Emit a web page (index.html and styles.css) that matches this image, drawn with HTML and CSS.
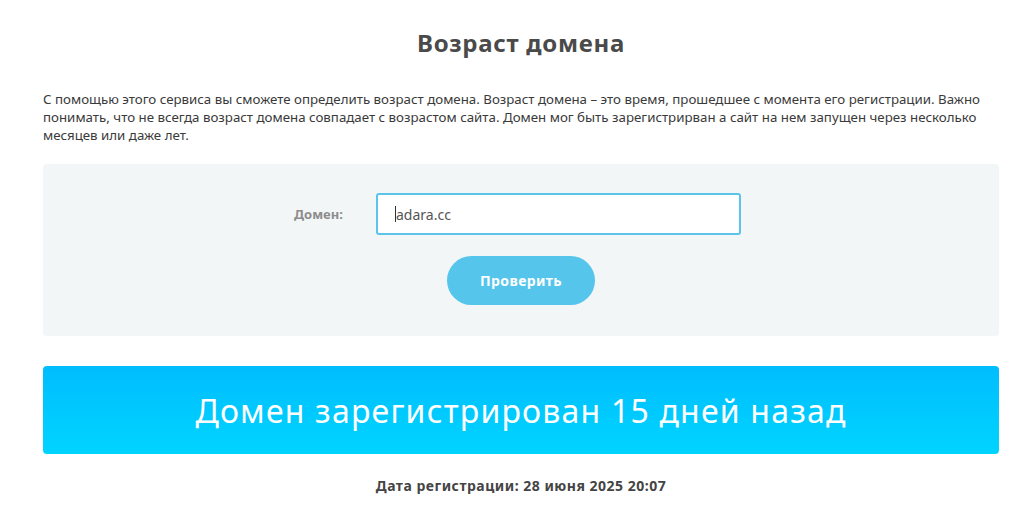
FILE: index.html
```html
<!DOCTYPE html>
<html lang="ru">
<head>
<meta charset="utf-8">
<title>Возраст домена</title>
<link rel="stylesheet" href="styles.css">
</head>
<body>
<main class="page">
  <h1 class="title">Возраст домена</h1>
  <p class="intro">С помощью этого сервиса вы сможете определить возраст домена. Возраст домена – это время, прошедшее с момента его регистрации. Важно понимать, что не всегда возраст домена совпадает с возрастом сайта. Домен мог быть зарегистрирван а сайт на нем запущен через несколько месяцев или даже лет.</p>
  <form class="check-box">
    <div class="field-row">
      <label class="field-label" for="domain">Домен:</label>
      <div class="field-input"><span class="caret"></span>adara.cc</div>
    </div>
    <button type="button" class="check-btn">Проверить</button>
  </form>
  <div class="result">Домен зарегистрирован 15 дней назад</div>
  <p class="reg-date">Дата регистрации: 28 июня 2025 20:07</p>
</main>
</body>
</html>
```
FILE: styles.css
```css
* { box-sizing: border-box; }
html, body { margin: 0; padding: 0; background: #fff; }
body { font-family: "Noto Sans", "Open Sans", sans-serif; color: #333; }
.page {
  width: 956px;
  margin-left: 43px;
  padding-top: 25px;
}
.title {
  margin: 0;
  text-align: center;
  font-size: 24px;
  font-weight: 700;
  color: #4a4a4a;
  line-height: 36px;
  letter-spacing: 0.7px;
}
.intro {
  margin: 29px 0 0;
  font-size: 13.3px;
  line-height: 18px;
  color: #3a3a3a;
}
.check-box {
  margin-top: 20px;
  background: #f3f6f7;
  border-radius: 4px;
  padding: 29px 0 31px;
  display: flex;
  flex-direction: column;
  align-items: center;
  gap: 21px;
}
.field-row {
  align-self: stretch;
  display: flex;
  align-items: center;
  padding-left: 251px;
}
.field-label {
  width: 82px;
  font-size: 13px;
  font-weight: 700;
  color: #8c8c8c;
}
.field-input {
  width: 365px;
  height: 42px;
  background: #fff;
  border: 2px solid #5ac4ea;
  border-radius: 3px;
  padding-left: 17px;
  display: flex;
  align-items: center;
  font-size: 14px;
  color: #555;
}
.caret {
  display: inline-block;
  width: 1px;
  height: 16px;
  background: #333;
}
.check-btn {
  width: 148px;
  height: 49px;
  border: none;
  border-radius: 25px;
  background: #55c5ec;
  color: #fff;
  font-family: inherit;
  font-size: 14px;
  font-weight: 700;
  letter-spacing: 0.4px;
  cursor: pointer;
}
.result {
  margin-top: 30px;
  height: 88px;
  border-radius: 4px;
  background: linear-gradient(to bottom, #00bdfe, #00d4ff);
  color: #fff;
  display: flex;
  align-items: center;
  justify-content: center;
  font-size: 32px;
  font-weight: 400;
  letter-spacing: 1.2px;
}
.reg-date {
  margin: 22px 0 0;
  text-align: center;
  font-size: 14px;
  font-weight: 700;
  color: #444;
  letter-spacing: 0.5px;
}
```
